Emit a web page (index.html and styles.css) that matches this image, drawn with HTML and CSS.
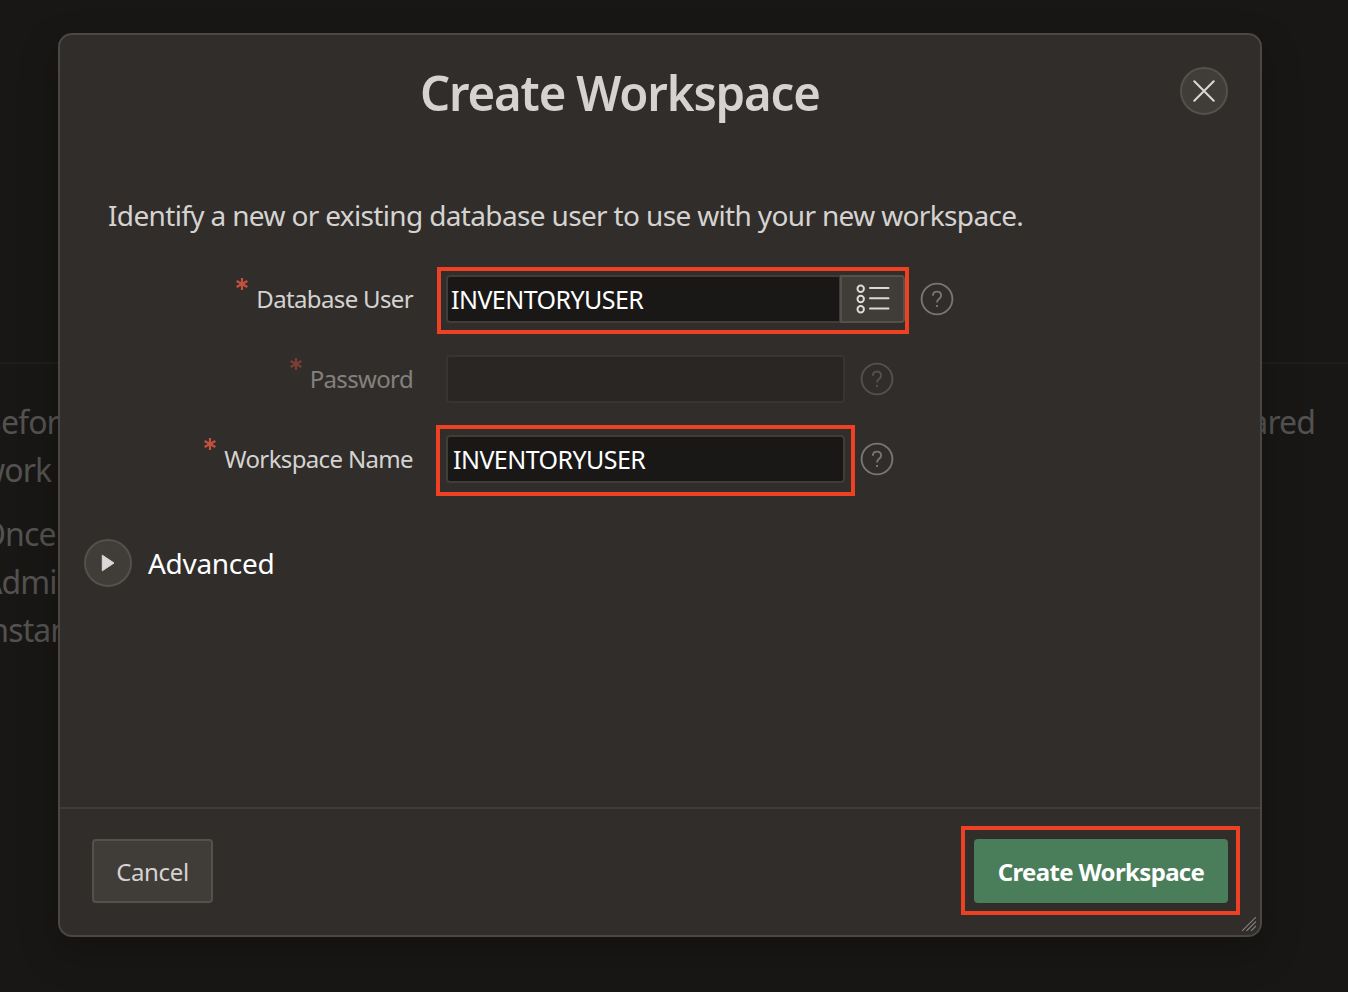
FILE: index.html
```
<!DOCTYPE html>
<html lang="en">
<head>
<meta charset="utf-8">
<title>Create Workspace</title>
<link rel="stylesheet" href="styles.css">
</head>
<body>
<main class="page">
  <div class="page-line l1"><span>Before</span><span>shared</span></div>
  <div class="page-line l2">work</div>
  <div class="page-line l3">Once</div>
  <div class="page-line l4">Admin</div>
  <div class="page-line l5">instance</div>
</main>
<section class="dialog" role="dialog" aria-labelledby="title">
  <header class="header">
    <h1 id="title" class="title"><span class="title-text">Create Workspace</span></h1>
    <button class="round" aria-label="Close"><svg width="22" height="22" viewBox="0 0 22 22"><path d="M1.3 1.3L20.7 20.7M20.7 1.3L1.3 20.7" fill="none" stroke="#dad9d7" stroke-width="2" stroke-linecap="round"/></svg></button>
  </header>
  <div class="body">
    <p class="intro"><span class="intro-text">Identify a new or existing database user to use with your new workspace.</span></p>
    <form class="form">
      <div class="row">
        <div class="label"><svg class="star" viewBox="0 0 12 12"><path d="M6 0V12M.6 3L11.4 9M11.4 3L.6 9"/></svg><span>Database User</span></div>
        <div class="field mark mark-db">
          <div class="input joined"><span>INVENTORYUSER</span></div>
          <div class="lov"><svg width="34" height="30" viewBox="0 0 34 30" fill="none" stroke="#dad9d7" stroke-width="2"><circle cx="4.7" cy="4.8" r="3.2"/><circle cx="4.7" cy="15" r="3.2"/><circle cx="4.7" cy="25.2" r="3.2"/><path d="M14 4H32.5M14 14.3H32.5M14 24.5H32.5" stroke-linecap="round"/></svg></div>
        </div>
        <svg class="help" viewBox="0 0 34 34"><circle cx="17" cy="17" r="15.4"/><path d="M12.9 13.7C12.9 10.9 14.6 9.6 17 9.6C19.4 9.6 21.1 11.2 21.1 13.5C21.1 17 17 16.5 17 20.4M17 23V25"/></svg>
      </div>
      <div class="row disabled">
        <div class="label"><svg class="star" viewBox="0 0 12 12"><path d="M6 0V12M.6 3L11.4 9M11.4 3L.6 9"/></svg><span>Password</span></div>
        <div class="field"><div class="input"></div></div>
        <svg class="help" viewBox="0 0 34 34"><circle cx="17" cy="17" r="15.4"/><path d="M12.9 13.7C12.9 10.9 14.6 9.6 17 9.6C19.4 9.6 21.1 11.2 21.1 13.5C21.1 17 17 16.5 17 20.4M17 23V25"/></svg>
      </div>
      <div class="row">
        <div class="label"><svg class="star" viewBox="0 0 12 12"><path d="M6 0V12M.6 3L11.4 9M11.4 3L.6 9"/></svg><span>Workspace Name</span></div>
        <div class="field mark mark-ws"><div class="input ws"><span>INVENTORYUSER</span></div></div>
        <svg class="help" viewBox="0 0 34 34"><circle cx="17" cy="17" r="15.4"/><path d="M12.9 13.7C12.9 10.9 14.6 9.6 17 9.6C19.4 9.6 21.1 11.2 21.1 13.5C21.1 17 17 16.5 17 20.4M17 23V25"/></svg>
      </div>
    </form>
    <div class="advanced">
      <button class="round" aria-label="Expand"><svg width="14" height="18" viewBox="0 0 14 18"><path d="M1.3 1.2L13 9L1.3 16.8Z" fill="#dad9d7" stroke="#dad9d7" stroke-linejoin="round"/></svg></button>
      <span class="advanced-text">Advanced</span>
    </div>
  </div>
  <footer class="footer">
    <button class="btn cancel">Cancel</button>
    <button class="btn create mark mark-create"><span>Create Workspace</span></button>
  </footer>
  <svg class="grip" viewBox="0 0 14 14"><path d="M0 14L14 0M4.5 14L14 4.5M9 14L14 9" stroke="#85827e" fill="none" stroke-width="1.1"/></svg>
</section>
</body>
</html>
```
FILE: styles.css
```
*, *::after { box-sizing: border-box; }
body {
  margin: 0;
  width: 1348px;
  height: 992px;
  overflow: hidden;
  background: #181715;
  color: #d5d3d1;
  font-family: "Noto Sans", sans-serif;
  font-weight: 450;
  position: relative;
}
button { font: inherit; color: inherit; padding: 0; margin: 0; }
span { white-space: nowrap; }

.page {
  margin-top: 362px;
  height: 630px;
  border-top: 2px solid #1e1d1c;
  padding-top: 34px;
  font-size: 32px;
  line-height: 48px;
  letter-spacing: -0.9px;
  color: #535250;
}
.page-line { height: 48px; }
.l1 { display: flex; justify-content: space-between; margin: 0 33px 0 -19px; }
.l2 { margin-left: -20px; }
.l3 { margin: 16px 0 0 -19px; }
.l4 { margin-left: -18px; }
.l5 { margin-left: -18px; }

.dialog {
  position: absolute;
  left: 58px;
  top: 33px;
  width: 1204px;
  height: 904px;
  display: flex;
  flex-direction: column;
  background: #312d2a;
  border: 2px solid #4a4744;
  border-radius: 14px;
  box-shadow: 0 16px 40px rgba(0, 0, 0, .22);
}
.header {
  height: 112px;
  padding: 0 32px;
  display: flex;
  align-items: center;
}
.title {
  flex: 1;
  margin: 2px 32px 0 0;
  text-align: center;
  font-size: 49px;
  font-weight: 600;
  line-height: 60px;
}
.title-text { display: inline-block; letter-spacing: -1.2px; transform: scaleX(.966); }
.round {
  width: 48px;
  height: 48px;
  flex: none;
  display: grid;
  place-items: center;
  border: 2px solid #54504c;
  border-radius: 50%;
  background: #403c38;
}
.body { flex: 1; }
.intro { margin: 48px 0 0 48px; font-size: 28px; line-height: 40px; }
.intro-text { letter-spacing: -0.65px; }
.form { padding-top: 24px; }
.row { height: 80px; padding-top: 16px; display: flex; align-items: flex-start; }
.label {
  width: 353px;
  height: 48px;
  flex: none;
  display: flex;
  justify-content: flex-end;
  font-size: 24px;
  line-height: 48px;
  letter-spacing: -0.65px;
}
.star { width: 12px; height: 12px; margin: 3px 8px 0 0; fill: none; stroke: #c4513e; stroke-width: 2.2; }
.field { display: flex; margin-left: 33px; }
.input {
  width: 399px;
  height: 48px;
  padding-left: 4px;
  border: 2px solid #403c38;
  border-radius: 4px;
  background: #191816;
  color: #fff;
  font-size: 25px;
  line-height: 44px;
  letter-spacing: -0.55px;
}
.joined { width: 395px; padding-left: 3px; border-radius: 4px 0 0 4px; }
.ws { padding-left: 5px; }
.lov {
  width: 65px;
  height: 48px;
  margin-left: -1px;
  border: 2px solid #54504c;
  border-radius: 0 4px 4px 0;
  background: #403c38;
  display: grid;
  place-items: center;
}
.help { width: 34px; height: 34px; margin: 7px 0 0 15px; fill: none; stroke: #797572; stroke-width: 1.9; }
.disabled .help, .disabled .label, .disabled .input { opacity: .5; }
.disabled .input { background: #24211f; }
.mark { position: relative; }
.mark::after { content: ""; position: absolute; border: 4px solid #ee4023; }
.mark-db::after { left: -9px; top: -8px; width: 472px; height: 67px; }
.mark-ws::after { left: -10px; top: -10px; width: 419px; height: 71px; }
.mark-create::after { left: -13px; top: -13px; width: 279px; height: 89px; }
.advanced {
  display: flex;
  align-items: center;
  gap: 16px;
  margin: 40px 0 0 24px;
  font-size: 28px;
  letter-spacing: -0.3px;
  color: #fff;
}
.footer {
  height: 128px;
  border-top: 2px solid #403c39;
  padding: 30px 32px 0;
  display: flex;
  justify-content: space-between;
  align-items: flex-start;
}
.btn { height: 64px; border-radius: 4px; font-size: 24px; letter-spacing: -0.35px; }
.cancel { width: 121px; background: #403c38; border: 2px solid #54504c; }
.create { width: 254px; background: #4a7d5a; border: 0; color: #fff; font-weight: 700; letter-spacing: -0.65px; }
.grip { position: absolute; right: 4px; bottom: 4px; width: 14px; height: 14px; }
```
